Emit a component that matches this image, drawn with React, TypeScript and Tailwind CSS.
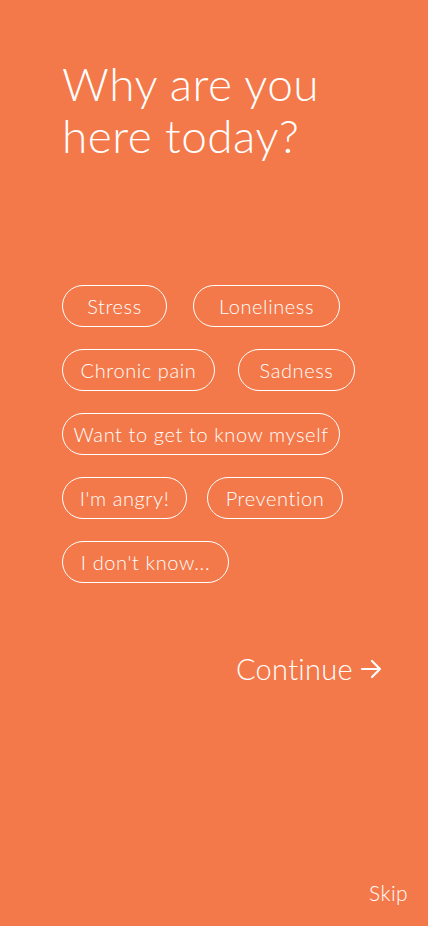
const rows: { gap: string; items: { label: string; w: string }[] }[] = [
  { gap: 'gap-[26px]', items: [{ label: 'Stress', w: 'w-[105px]' }, { label: 'Loneliness', w: 'w-[147px]' }] },
  { gap: 'gap-[23px]', items: [{ label: 'Chronic pain', w: 'w-[153px]' }, { label: 'Sadness', w: 'w-[117px]' }] },
  { gap: 'gap-[20px]', items: [{ label: 'Want to get to know myself', w: 'w-[278px]' }] },
  { gap: 'gap-[20px]', items: [{ label: "I'm angry!", w: 'w-[125px]' }, { label: 'Prevention', w: 'w-[136px]' }] },
  { gap: 'gap-[20px]', items: [{ label: "I don't know...", w: 'w-[167px]' }] },
];

export default function App() {
  return (
    <div className="min-h-[926px] w-full bg-[#f4794a] text-white flex flex-col font-['Lato','Open_Sans',sans-serif]">
      <h1 className="pl-[62px] pt-[58px] text-[46px] leading-[52px] tracking-[0.01em] font-light">
        Why are you
        <br />
        here today?
      </h1>

      <div className="pl-[62px] mt-[123px] flex flex-col gap-[22px]">
        {rows.map((row, i) => (
          <div key={i} className={`flex ${row.gap}`}>
            {row.items.map((c) => (
              <button
                key={c.label}
                className={`${c.w} h-[42px] rounded-full border border-white text-[20px] tracking-[0.03em] font-light flex items-center justify-center whitespace-nowrap`}
              >
                {c.label}
              </button>
            ))}
          </div>
        ))}
      </div>

      <div className="flex justify-end pr-[45px] mt-[64px]">
        <button className="flex items-center gap-[6px] text-[29px] tracking-[0.01em] font-light">
          Continue
          <svg width="24" height="24" viewBox="0 0 24 24" fill="none" stroke="currentColor" strokeWidth="2.2" strokeLinecap="round" strokeLinejoin="round">
            <path d="M3 12h18M13 4l8 8-8 8" />
          </svg>
        </button>
      </div>

      <div className="mt-auto flex justify-end pr-[20px] pb-[18px]">
        <button className="text-[21px] tracking-[0.02em] font-light">Skip</button>
      </div>
    </div>
  );
}
